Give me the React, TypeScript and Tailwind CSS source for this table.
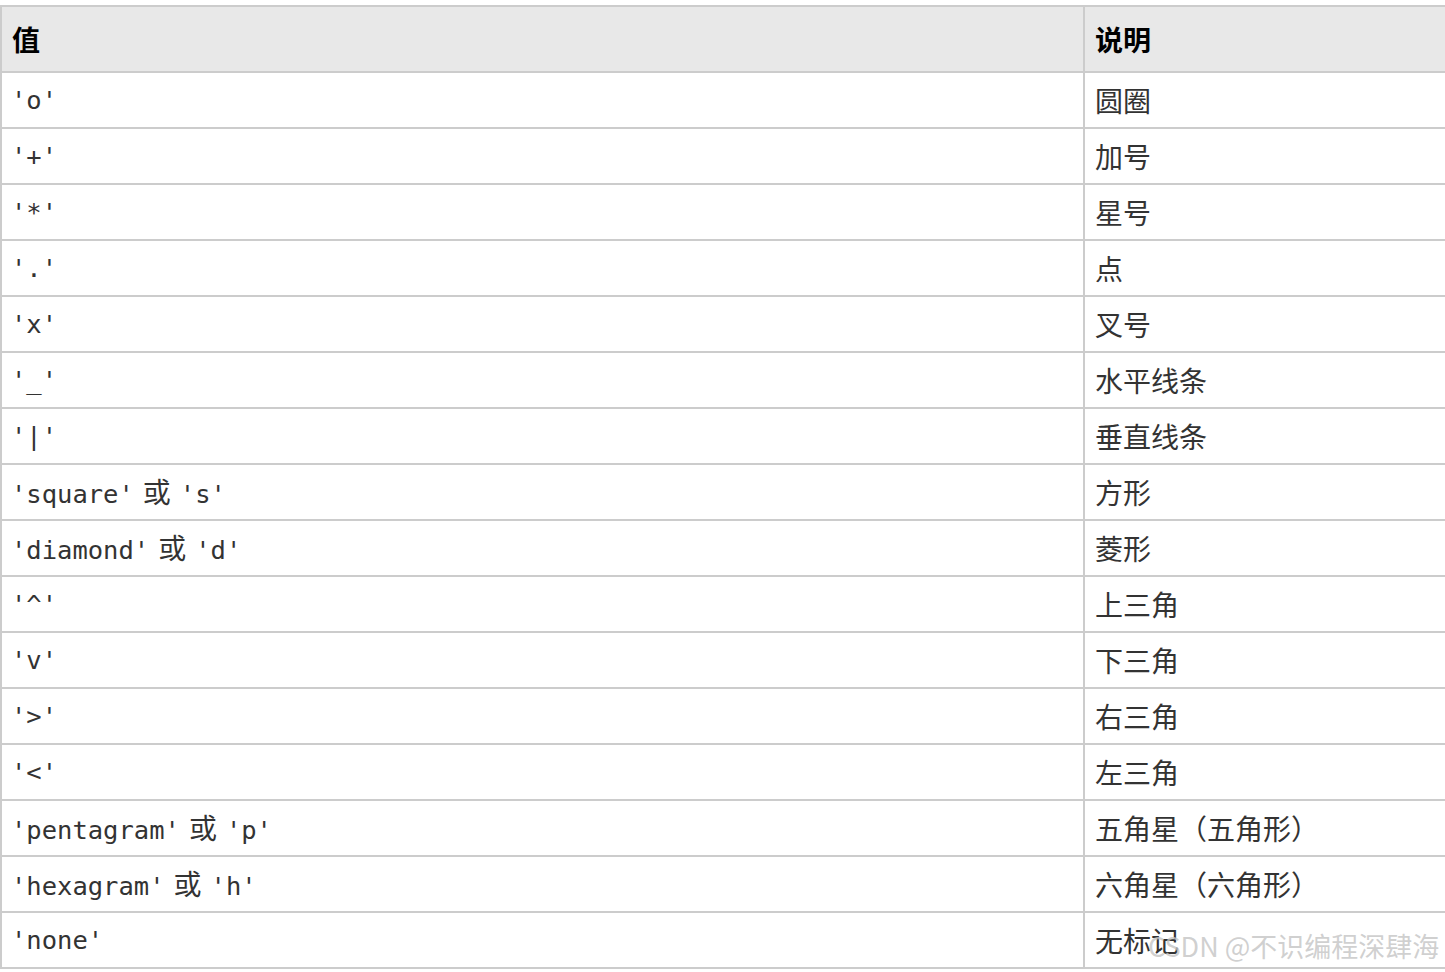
const cjk = "font-['Noto_Sans_CJK_SC','Noto_Sans',sans-serif]";
const mono = "font-['DejaVu_Sans_Mono','Liberation_Mono',monospace]";

type Row = { codes: string[]; desc: string };

const rows: Row[] = [
  { codes: ["'o'"], desc: '圆圈' },
  { codes: ["'+'"], desc: '加号' },
  { codes: ["'*'"], desc: '星号' },
  { codes: ["'.'"], desc: '点' },
  { codes: ["'x'"], desc: '叉号' },
  { codes: ["'_'"], desc: '水平线条' },
  { codes: ["'|'"], desc: '垂直线条' },
  { codes: ["'square'", "'s'"], desc: '方形' },
  { codes: ["'diamond'", "'d'"], desc: '菱形' },
  { codes: ["'^'"], desc: '上三角' },
  { codes: ["'v'"], desc: '下三角' },
  { codes: ["'>'"], desc: '右三角' },
  { codes: ["'<'"], desc: '左三角' },
  { codes: ["'pentagram'", "'p'"], desc: '五角星（五角形）' },
  { codes: ["'hexagram'", "'h'"], desc: '六角星（六角形）' },
  { codes: ["'none'"], desc: '无标记' },
];

function ValueCell({ codes }: { codes: string[] }) {
  return (
    <td className="border-2 border-[#cccccc] pl-[9px] align-middle">
      {codes.map((c, i) => (
        <span key={c}>
          {i > 0 && <span className={`${cjk} mx-[9px] text-[28px]`}>或</span>}
          <span className={`${mono} text-[25.5px]`}>{c}</span>
        </span>
      ))}
    </td>
  );
}

export default function App() {
  return (
    <div className="relative h-[972px] w-[1445px] overflow-hidden bg-white pt-[5px]">
      <table className={`${cjk} w-[1460px] border-collapse text-[#333333]`}>
        <thead>
          <tr className="h-[66px] bg-[#e8e8e8]">
            <th className="w-[1083px] border-2 border-[#cccccc] pl-[10px] text-left text-[28px] font-bold text-black">
              值
            </th>
            <th className="border-2 border-[#cccccc] pl-[10px] text-left text-[28px] font-bold text-black">
              说明
            </th>
          </tr>
        </thead>
        <tbody>
          {rows.map((r) => (
            <tr key={r.desc} className="h-[56px]">
              <ValueCell codes={r.codes} />
              <td className="border-2 border-[#cccccc] pl-[10px] text-[28px]">{r.desc}</td>
            </tr>
          ))}
        </tbody>
      </table>

      {/* watermark */}
      <div
        className={`${cjk} pointer-events-none absolute left-[1148px] top-[926px] whitespace-nowrap text-[27px] leading-[39px] text-[#c4c4c4]/80`}
      >
        CSDN @不识编程深肆海
      </div>
    </div>
  );
}
